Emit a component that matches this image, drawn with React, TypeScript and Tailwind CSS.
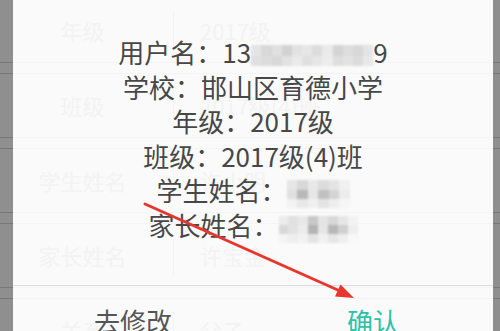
import React from 'react';

interface Row {
  label: string;
  value: string;
}

const rows: Row[] = [
  { label: '年级', value: '2017级' },
  { label: '班级', value: '2017级(4)班' },
  { label: '学生姓名', value: '许小明' },
  { label: '家长姓名', value: '许宝金' },
  { label: '关系', value: '父子' },
];

// blurred blocks hiding personal info
const phoneCells = [
  ['#e4e4e4', '#d8d8d8', '#e0e0e0', '#d2d2d2', '#e2e2e2', '#e6e6e6', '#dcdcdc', '#eaeaea', '#d4d4d4', '#dedede', '#d8d8d8', '#e4e4e4'],
  ['#e0e0e0', '#dcdcdc', '#d8d8d8', '#e2e2e2', '#eaeaea', '#e0e0e0', '#e6e6e6', '#ececec', '#dedede', '#e2e2e2', '#dcdcdc', '#e8e8e8'],
];
const studentCells = [
  ['#e6e6e6', '#d8d8d8', '#e8e8e8', '#dcdcdc', '#e4e4e4', '#f0f0f0'],
  ['#e0e0e0', '#b8b8b8', '#e6e6e6', '#c0c0c0', '#d4d4d4', '#ececec'],
  ['#f2f2f2', '#e8e8e8', '#f0f0f0', '#e4e4e4', '#eeeeee', '#f6f6f6'],
];
const parentCells = [
  ['#ececec', '#e0e0e0', '#e8e8e8', '#c8c8c8', '#e4e4e4', '#d8d8d8', '#e6e6e6', '#f2f2f2'],
  ['#d8d8d8', '#e2e2e2', '#ececec', '#b4b4b4', '#e6e6e6', '#b8b8b8', '#d0d0d0', '#eeeeee'],
  ['#f4f4f4', '#eeeeee', '#f2f2f2', '#e4e4e4', '#f0f0f0', '#e6e6e6', '#eeeeee', '#f8f8f8'],
];

const Mosaic = ({ cells, w, h }: { cells: string[][]; w: number; h: number }) => (
  <span
    className="inline-flex flex-col align-middle blur-[1px] overflow-hidden"
    style={{ width: w, height: h }}
  >
    {cells.map((r, i) => (
      <span key={i} className="flex flex-1">
        {r.map((c, j) => (
          <span key={j} className="flex-1" style={{ backgroundColor: c }} />
        ))}
      </span>
    ))}
  </span>
);

const FormRows = ({ ghost }: { ghost?: boolean }) => (
  <div className="flex flex-col gap-[10px] mt-[-2px] w-[500px]">
    {rows.map(r => (
      <div
        key={r.label}
        className={`h-[65px] flex items-center border-y text-[22px] ${
          ghost ? 'border-[#f4f4f4] text-[#f3f3f3]' : 'border-[#d4d4d4] text-[#333]'
        }`}
      >
        <div className="w-[165px] text-center">{r.label}</div>
        <div className={`w-px h-[40px] ml-[8px] ${ghost ? 'bg-[#f3f3f3]' : 'bg-[#d4d4d4]'}`} />
        <div className="pl-[26px]">{r.value}</div>
      </div>
    ))}
  </div>
);

export default function App() {
  return (
    <div className="relative w-[500px] h-[331px] overflow-hidden bg-white font-['Noto_Sans_CJK_SC',sans-serif]">
      {/* page underneath */}
      <FormRows />

      {/* dim overlay */}
      <div className="absolute inset-0 bg-black/[0.44]" />

      {/* confirm dialog */}
      <div className="absolute left-[13px] top-[-20px] w-[480px] h-[380px] rounded-lg bg-[#fafafa] overflow-hidden">
        <div className="absolute left-[-13px] top-[20px] pointer-events-none" aria-hidden>
          <FormRows ghost />
        </div>

        <div className="relative h-[305px] pt-[55px] text-center text-[26px] leading-[34.6px] text-[#474747]">
          <div>
            用户名：13
            <Mosaic cells={phoneCells} w={122} h={21} />
            9
          </div>
          <div>学校：邯山区育德小学</div>
          <div>年级：2017级</div>
          <div>班级：2017级(4)班</div>
          <div>
            学生姓名：<Mosaic cells={studentCells} w={63} h={28} />
          </div>
          <div>
            家长姓名：<Mosaic cells={parentCells} w={79} h={27} />
          </div>
        </div>

        <div className="relative flex h-[70px] border-t border-[#dcdcdc] text-[26px]">
          <button className="flex-1 flex items-center justify-center text-[#555]">去修改</button>
          <button className="flex-1 flex items-center justify-center text-[#2ec2a8]">确认</button>
        </div>
      </div>

      {/* annotation arrow */}
      <svg className="absolute inset-0 pointer-events-none" width="500" height="331" viewBox="0 0 500 331">
        <line x1="145" y1="204" x2="340" y2="291" stroke="#e8362f" strokeWidth="3" strokeLinecap="round" />
        <polygon points="354,298 335,296.5 340.5,284.5" fill="#e8362f" />
      </svg>
    </div>
  );
}
